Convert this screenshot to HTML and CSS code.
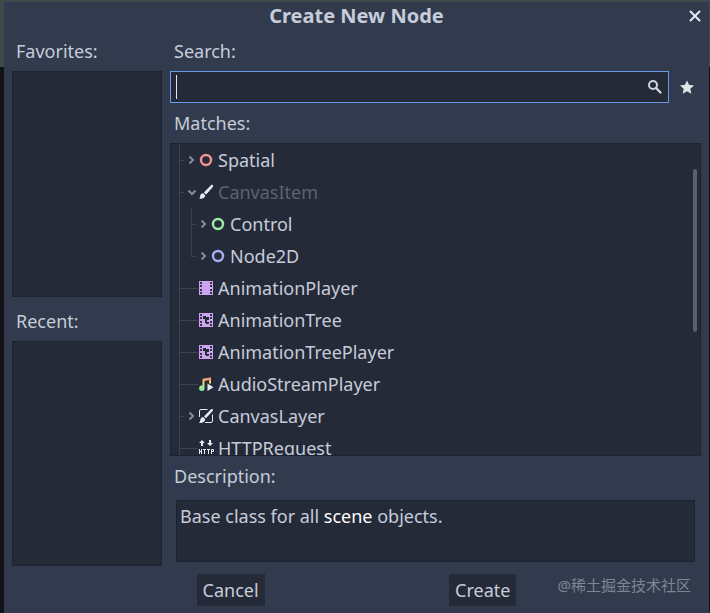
FILE: index.html
```html
<!DOCTYPE html>
<html lang="en">
<head>
    <meta charset="UTF-8">
    <meta name="viewport" content="width=device-width, initial-scale=1.0">
    <title>Create New Node</title>
    <link rel="stylesheet" href="styles.css">
</head>
<body>
    <div class="dialog" role="dialog" aria-labelledby="dialogTitle">
        <div class="titlebar">
            <h1 id="dialogTitle">Create New Node</h1>
            <button class="icon-button close" aria-label="Close">
                <svg width="12" height="12" viewBox="0 0 12 12"><path d="M1.500 1.500l9 9M10.500 1.500l-9 9" stroke="#e6eaf0" stroke-width="2" stroke-linecap="round"/></svg>
            </button>
        </div>

        <div class="content">
            <div class="sidebar">
                <h2 class="label">Favorites:</h2>
                <div class="panel list"></div>
                <h2 class="label recent">Recent:</h2>
                <div class="panel list"></div>
            </div>

            <div class="main">
                <label class="label" for="search">Search:</label>
                <div class="search-row">
                    <div class="search-box">
                        <span class="caret"></span>
                        <input type="text" id="search">
                        <svg width="16" height="16" viewBox="0 0 16 16" fill="none" stroke="#ced3de" stroke-width="2"><circle cx="6" cy="6" r="4"/><path d="M9 9l4.500 4.500" stroke-width="2.400" stroke-linecap="round"/></svg>
                    </div>
                    <button class="icon-button" aria-label="Favorite">
                        <svg width="16" height="16" viewBox="0 0 16 16"><path d="M8 1.500l2 4.300 5 .6-3.700 3.300 1 5.100L8 12.300l-4.300 2.500 1-5.100L1 6.400l5-.6z" fill="#e0e5e8"/></svg>
                    </button>
                </div>

                <h2 class="label">Matches:</h2>
                <div class="panel matches">
                    <ul class="tree">
                        <li>
                            <div class="row">
                                <span class="guide"></span>
                                <button class="arrow" aria-label="Expand"><svg width="12" height="12" viewBox="0 0 12 12"><path d="M3.500 2.500L7 6 3.500 9.500"/></svg></button>
                                <svg class="icon" viewBox="0 0 16 16"><circle cx="8" cy="8" r="5" fill="none" stroke="#f09494" stroke-width="2.400"/></svg>
                                <span>Spatial</span>
                            </div>
                        </li>
                        <li>
                            <div class="row disabled">
                                <span class="guide"></span>
                                <button class="arrow" aria-label="Collapse"><svg width="12" height="12" viewBox="0 0 12 12"><path d="M2.500 4.500L6 8l3.500-3.500"/></svg></button>
                                <svg class="icon" viewBox="0 0 16 16" fill="#e6eaf2"><path d="M14.800 1.200c.5.500.4 1.200 0 1.700L8.200 10.600 5.800 8.400 13 1.300c.5-.5 1.300-.6 1.800-.1z"/><path d="M5 9.200l2.300 2.100c-.1 2.600-2.700 3.900-6.300 3.300 1.200-.7 1-1.700 1.200-2.900.2-1.500 1.400-2.600 2.800-2.500z"/></svg>
                                <span>CanvasItem</span>
                            </div>
                            <ul>
                                <li>
                                    <div class="row">
                                        <span class="guide"></span>
                                        <button class="arrow" aria-label="Expand"><svg width="12" height="12" viewBox="0 0 12 12"><path d="M3.500 2.500L7 6 3.500 9.500"/></svg></button>
                                        <svg class="icon" viewBox="0 0 16 16"><circle cx="8" cy="8" r="5" fill="none" stroke="#9ee8a8" stroke-width="2.400"/></svg>
                                        <span>Control</span>
                                    </div>
                                </li>
                                <li>
                                    <div class="row">
                                        <span class="guide"></span>
                                        <button class="arrow" aria-label="Expand"><svg width="12" height="12" viewBox="0 0 12 12"><path d="M3.500 2.500L7 6 3.500 9.500"/></svg></button>
                                        <svg class="icon" viewBox="0 0 16 16"><circle cx="8" cy="8" r="5" fill="none" stroke="#a5adec" stroke-width="2.400"/></svg>
                                        <span>Node2D</span>
                                    </div>
                                </li>
                            </ul>
                        </li>
                        <li>
                            <div class="row">
                                <span class="guide long"></span>
                                <svg class="icon" viewBox="0 0 16 16"><path d="M1 1h14v14H1z" fill="#cea4f1"/><path d="M2 2h2v2H2zM2 5h2v2H2zM2 9h2v2H2zM2 12h2v2H2zM12 2h2v2h-2zM12 5h2v2h-2zM12 9h2v2h-2zM12 12h2v2h-2z" fill="#353549"/></svg>
                                <span>AnimationPlayer</span>
                            </div>
                        </li>
                        <li>
                            <div class="row">
                                <span class="guide long"></span>
                                <svg class="icon" viewBox="0 0 16 16"><path d="M1 1h14v14H1z" fill="#cea4f1"/><path d="M2 2h2v2H2zM2 5h2v2H2zM2 9h2v2H2zM2 12h2v2H2zM12 2h2v2h-2zM12 5h2v2h-2zM12 9h2v2h-2zM12 12h2v2h-2z" fill="#353549"/><path d="M5 4h3v1h3v3H9v2h2v2H8v-1H7V7H5z" fill="#252a38"/></svg>
                                <span>AnimationTree</span>
                            </div>
                        </li>
                        <li>
                            <div class="row">
                                <span class="guide long"></span>
                                <svg class="icon" viewBox="0 0 16 16"><path d="M1 1h14v14H1z" fill="#cea4f1"/><path d="M2 2h2v2H2zM2 5h2v2H2zM2 9h2v2H2zM2 12h2v2H2zM12 2h2v2h-2zM12 5h2v2h-2zM12 9h2v2h-2zM12 12h2v2h-2z" fill="#353549"/><path d="M5 4h3v1h3v3H9v2h2v2H8v-1H7V7H5z" fill="#252a38"/></svg>
                                <span>AnimationTreePlayer</span>
                            </div>
                        </li>
                        <li>
                            <div class="row">
                                <span class="guide long"></span>
                                <svg class="icon" viewBox="0 0 16 16">
                                    <defs>
                                        <linearGradient id="audio" x1="0" y1="0" x2="0" y2="1">
                                            <stop offset="0" stop-color="#ff7a7a"/>
                                            <stop offset=".4" stop-color="#f1dc7a"/>
                                            <stop offset="1" stop-color="#6ff0a0"/>
                                        </linearGradient>
                                    </defs>
                                    <path d="M13 1.200v6.300h-2V4L6.500 5v7.200a2.700 2.700 0 1 1-2-2.600V2.800z" fill="url(#audio)"/>
                                    <path d="M9.500 7.500v7.500l6-3.800z" fill="#e6eaf2"/>
                                </svg>
                                <span>AudioStreamPlayer</span>
                            </div>
                        </li>
                        <li>
                            <div class="row">
                                <span class="guide"></span>
                                <button class="arrow" aria-label="Expand"><svg width="12" height="12" viewBox="0 0 12 12"><path d="M3.500 2.500L7 6 3.500 9.500"/></svg></button>
                                <svg class="icon" viewBox="0 0 16 16" fill="#e6eaf2"><path d="M9.500 1.500H3A1.500 1.500 0 0 0 1.500 3v6M14.500 6.500V13a1.500 1.500 0 0 1-1.500 1.500H7" fill="none" stroke="#e6eaf2"/><path d="M14.600 1.300c.5.500.4 1.200 0 1.700L8 10.200 6 8.300l7-7c.5-.4 1.200-.5 1.600 0z"/><path d="M5.200 9.100l2 1.900c-.1 2.800-2.600 4.300-6.200 4 1-.8 1-1.800 1.300-3 .3-1.600 1.500-2.900 2.900-2.900z"/></svg>
                                <span>CanvasLayer</span>
                            </div>
                        </li>
                        <li>
                            <div class="row">
                                <span class="guide long"></span>
                                <svg class="icon" viewBox="0 0 16 16" fill="#e6eaf2"><path d="M4 0l3 3H5v3H3V3H1zM11 0h2v3h2l-3 3-3-3h2z"/><path d="M1.500 9v5M3.500 9v5M1 11.500h3M5 9.500h3M6.500 9v5M9 9.500h3M10.500 9v5M13.500 14V9.500h2v2h-2" fill="none" stroke="#e6eaf2"/></svg>
                                <span>HTTPRequest</span>
                            </div>
                        </li>
                    </ul>
                    <div class="scrollbar"><div class="thumb"></div></div>
                </div>

                <h2 class="label description-label">Description:</h2>
                <div class="panel description">Base class for all <strong>scene</strong> objects.</div>
            </div>
        </div>

        <div class="footer">
            <button class="button">Cancel</button>
            <button class="button">Create</button>
        </div>
    </div>
    <div class="watermark">@稀土掘金技术社区</div>
</body>
</html>
```
FILE: styles.css
```css
* {
    box-sizing: border-box;
}

body {
    display: flex;
    height: 100vh;
    margin: 0;
    padding: 2px 1px 0 4px;
    overflow: hidden;
    background: linear-gradient(#3d4a49 67px, #121318 67px);
    color: #c6ccda;
    font-family: "Noto Sans", "Noto Sans CJK SC", sans-serif;
    font-size: 18px;
    line-height: 24px;
}

h1,
h2,
ul {
    margin: 0;
    padding: 0;
    font-size: inherit;
    font-weight: normal;
    list-style: none;
}

button,
input {
    padding: 0;
    border: none;
    background: none;
    color: inherit;
    font: inherit;
}

svg {
    display: block;
    flex: none;
}

.dialog {
    flex: 1;
    display: flex;
    flex-direction: column;
    min-width: 0;
    padding: 0 8px 7px;
    background-color: #313b4d;
}

/* Title bar */
.titlebar {
    display: grid;
    grid-template-columns: 12px 1fr 12px;
    align-items: center;
    height: 29px;
    padding-bottom: 2px;
}

.titlebar h1 {
    grid-column: 2;
    font-size: 20px;
    font-weight: bold;
    text-align: center;
}

.icon-button {
    display: flex;
    align-items: center;
    justify-content: center;
    cursor: pointer;
}

/* Content */
.content {
    flex: 1;
    display: grid;
    grid-template-columns: 150px 1fr;
    gap: 8px;
    min-height: 0;
}

.sidebar,
.main {
    display: flex;
    flex-direction: column;
    min-width: 0;
    min-height: 0;
}

.main {
    padding-bottom: 4px;
}

.label {
    padding: 0 4px;
    line-height: 40px;
}

.recent {
    padding-top: 4px;
}

.description-label {
    padding-bottom: 4px;
}

.panel {
    border: 1px solid #1b2231;
    background-color: #252a38;
}

.list {
    flex: 1;
}

.search-row {
    display: flex;
    gap: 10px;
    padding-right: 6px;
}

.search-box {
    flex: 1;
    display: flex;
    align-items: center;
    height: 32px;
    padding: 0 5px;
    border: 1px solid #699ce8;
    background-color: #252a38;
}

.search-box input {
    flex: 1;
    min-width: 0;
    outline: none;
    caret-color: transparent;
}

.caret {
    width: 1px;
    height: 24px;
    background-color: #e0e4ec;
}

/* Matches tree */
.matches {
    flex: 1;
    display: flex;
    min-height: 0;
    overflow: hidden;
}

.tree {
    flex: 1;
    padding-left: 8px;
}

.tree li {
    background: linear-gradient(#3c4250, #3c4250) no-repeat 0 0 / 1px 100%;
}

.tree ul {
    padding-left: 12px;
}

.tree ul li:last-child {
    background-size: 1px 16px;
}

.row {
    display: flex;
    align-items: center;
    height: 32px;
}

.row.disabled {
    color: #5c6270;
}

.guide {
    width: 5px;
    height: 1px;
    margin-right: 2px;
    background-color: #3c4250;
}

.guide.long {
    width: 19px;
    margin-right: 0;
}

.arrow {
    cursor: pointer;
}

.arrow path {
    fill: none;
    stroke: #878c99;
    stroke-width: 2;
}

.icon {
    width: 16px;
    height: 16px;
    margin-right: 4px;
}

.scrollbar {
    width: 4px;
    margin-right: 3px;
    padding-top: 25px;
}

.thumb {
    height: 163px;
    border-radius: 2px;
    background-color: #5b606d;
}

.description {
    height: 62px;
    margin: 0 6px;
    padding: 3px;
}

.description strong {
    color: #ffffff;
    font-weight: normal;
}

/* Footer */
.footer {
    display: flex;
    justify-content: space-evenly;
    padding-top: 8px;
}

.button {
    height: 32px;
    padding: 0 6px;
    background-color: #252a38;
    cursor: pointer;
}

.watermark {
    position: absolute;
    right: 19px;
    bottom: 16px;
    color: #7e8694;
    font-size: 15px;
}
```
